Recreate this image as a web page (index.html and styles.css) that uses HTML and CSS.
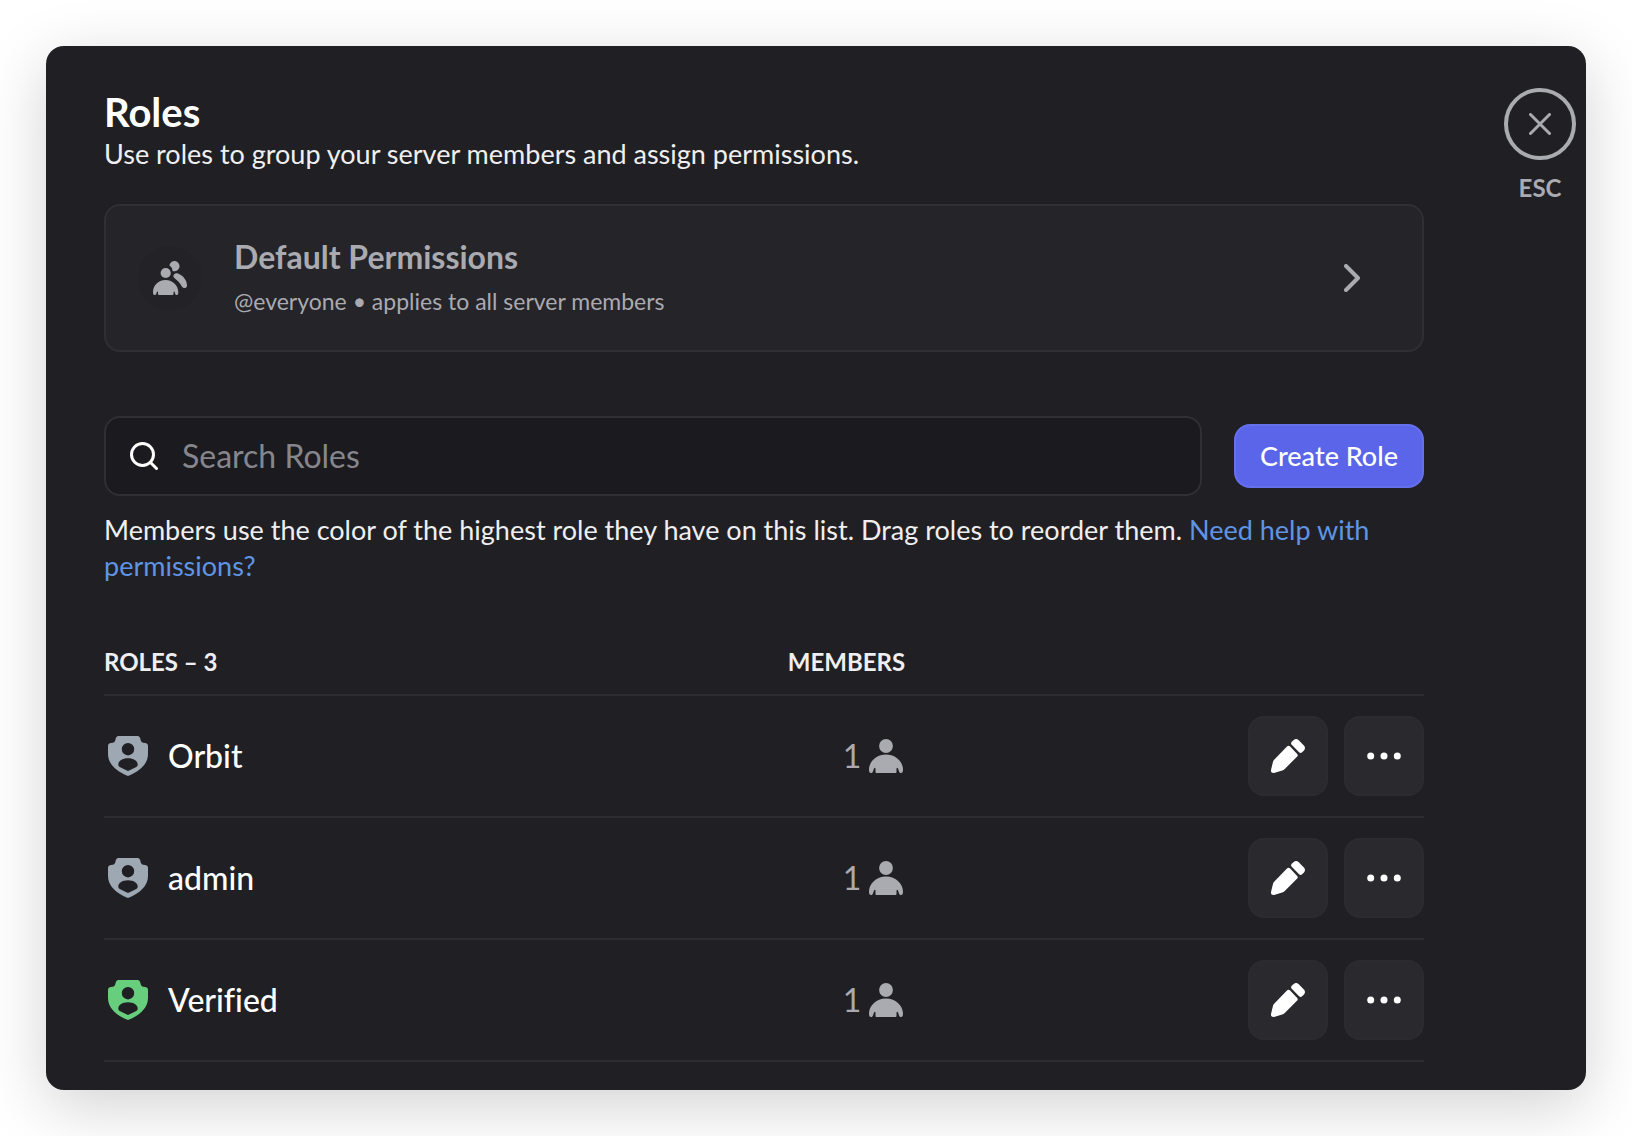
FILE: index.html
```
<!DOCTYPE html>
<html lang="en">
<head>
  <meta charset="UTF-8">
  <title>Roles</title>
  <meta name="viewport" content="width=device-width, initial-scale=1.0">
  <link rel="stylesheet" href="styles.css">
</head>
<body>

<!-- shared icons -->
<svg class="sprite" aria-hidden="true">
  <symbol id="i-shield" viewBox="0 0 40 40">
    <path fill-rule="evenodd" d="M10.500 0h19q2.500 0 3 3.500q.5 3.500 4.500 3.500q3 .3 3 3v8c0 10-8.500 17.500-20 22C8.500 35.500 0 28 0 18v-8q0-2.700 3-3q4 0 4.500-3.500Q8 0 10.500 0zM20 7a6.200 6.200 0 1 0 0 12.400A6.200 6.200 0 0 0 20 7zM20 22.300c-6 0-9.700 3-9.700 6.200 0 1.200.4 1.900 1.500 2.500 2.600 1.500 5.200 2.800 8.200 4 3-1.200 5.600-2.500 8.200-4 1.100-.6 1.500-1.300 1.500-2.500 0-3.200-3.700-6.200-9.700-6.200z"/>
  </symbol>
  <symbol id="i-user" viewBox="0 0 34 34">
    <circle cx="17" cy="7" r="6.900"/>
    <path d="M17 15.500C7 15.500 0 23 0 30.500c0 2.400.6 3.500 2 3.500 1.200 0 1.600-.6 2.100-2l.9-2.500c.4-1 1.500-.8 1.500.3V33q0 1 1 1h19q1 0 1-1v-3.200c0-1.100 1.100-1.300 1.500-.3l.9 2.500c.5 1.400.9 2 2.100 2 1.400 0 2-1.100 2-3.500C34 23 27 15.500 17 15.500z"/>
  </symbol>
  <symbol id="i-pencil" viewBox="0 0 34 34">
    <path d="M16.200 7.300q1.400-1.200 2.700 0l7.300 7.600q1.100 1.300 0 2.600L13.500 30.200q-1 1-2.300 1.400L3 33.900q-3.600.4-3-3l2-8.200q.4-1.300 1.400-2.300z"/>
    <path d="M22.500 1.200q2.600-2.300 5.200 0l5.200 5.300q2.200 2.500 0 5l-1.800 1.800q-1.500 1.200-3 0l-7.400-7.600q-1.200-1.500 0-2.900z"/>
  </symbol>
  <symbol id="i-dots" viewBox="0 0 34 34">
    <circle cx="3.700" cy="17" r="3.500"/><circle cx="17" cy="17" r="3.500"/><circle cx="30.300" cy="17" r="3.500"/>
  </symbol>
</svg>

<main class="window">
  <div class="content">

    <header>
      <h1 class="title">Roles</h1>
      <p class="text">Use roles to group your server members and assign permissions.</p>
    </header>

    <button class="default-card" type="button">
      <span class="default-icon">
        <svg width="34" height="34" viewBox="0 0 34 34" fill="currentColor">
          <path d="M16.400 4.300a5.100 5.100 0 1 1 4.300 5.900h-1a8 8 0 0 0-3.300-5.900z"/>
          <path d="M21 13.500c1-1.300 2.400-1.700 4-1.100 5.300 2 9 7 9 12.100 0 1.500-.8 2.500-2.200 2.500-1.500 0-2.400-.6-3.200-2-1.500-2.900-3.800-5.400-6.700-7.500-1.700-1.200-2-2.600-.9-4z"/>
          <circle cx="12.700" cy="12" r="5.100"/>
          <path d="M12.500 19C5 19 0 25 0 31c0 2.200.5 3 1.600 3 1 0 1.400-.5 1.800-1.600l.5-1.300c.3-.8 1.100-.6 1.100.2V33q0 1 1 1h13.500q1 0 1-1v-1.700c0-.8.8-1 1.100-.2l.5 1.300c.4 1.100.8 1.600 1.700 1.600 1 0 1.500-.8 1.500-3C25.300 25 20 19 12.500 19z"/>
        </svg>
      </span>
      <span class="default-text">
        <span class="default-name">Default Permissions</span>
        <span class="default-note">@everyone • applies to all server members</span>
      </span>
      <svg class="chevron" width="16" height="28" viewBox="0 0 16 28">
        <path d="M2 2l12 12L2 26"/>
      </svg>
    </button>

    <div class="toolbar">
      <label class="search">
        <svg class="search-icon" width="28" height="28" viewBox="0 0 28 28" role="img" aria-label="Search">
          <circle cx="12.500" cy="12.500" r="11"/><path d="M20.300 20.300l6.200 6.200"/>
        </svg>
        <input class="search-input" type="text" placeholder="Search Roles">
      </label>
      <button class="create-btn" type="button">Create Role</button>
    </div>

    <p class="text">
      Members use the color of the highest role they have on this list. Drag roles to reorder them.
      <a class="link" href="#">Need help with permissions?</a>
    </p>

    <table class="roles">
      <colgroup>
        <col class="col-role">
        <col class="col-members">
        <col>
      </colgroup>
      <thead>
        <tr>
          <th>ROLES – 3</th>
          <th class="members">MEMBERS</th>
          <td></td>
        </tr>
      </thead>
      <tbody>
        <tr>
          <td>
            <div class="role">
              <svg class="shield" width="40" height="40"><use href="#i-shield"/></svg>
              Orbit
            </div>
          </td>
          <td class="members">
            <div class="count">1 <svg width="34" height="34"><use href="#i-user"/></svg></div>
          </td>
          <td>
            <div class="actions">
              <button class="icon-btn" type="button" aria-label="Edit"><svg width="34" height="34"><use href="#i-pencil"/></svg></button>
              <button class="icon-btn" type="button" aria-label="More"><svg width="34" height="34"><use href="#i-dots"/></svg></button>
            </div>
          </td>
        </tr>
        <tr>
          <td>
            <div class="role">
              <svg class="shield" width="40" height="40"><use href="#i-shield"/></svg>
              admin
            </div>
          </td>
          <td class="members">
            <div class="count">1 <svg width="34" height="34"><use href="#i-user"/></svg></div>
          </td>
          <td>
            <div class="actions">
              <button class="icon-btn" type="button" aria-label="Edit"><svg width="34" height="34"><use href="#i-pencil"/></svg></button>
              <button class="icon-btn" type="button" aria-label="More"><svg width="34" height="34"><use href="#i-dots"/></svg></button>
            </div>
          </td>
        </tr>
        <tr>
          <td>
            <div class="role">
              <svg class="shield green" width="40" height="40"><use href="#i-shield"/></svg>
              Verified
            </div>
          </td>
          <td class="members">
            <div class="count">1 <svg width="34" height="34"><use href="#i-user"/></svg></div>
          </td>
          <td>
            <div class="actions">
              <button class="icon-btn" type="button" aria-label="Edit"><svg width="34" height="34"><use href="#i-pencil"/></svg></button>
              <button class="icon-btn" type="button" aria-label="More"><svg width="34" height="34"><use href="#i-dots"/></svg></button>
            </div>
          </td>
        </tr>
      </tbody>
    </table>
  </div>

  <!-- close -->
  <aside class="close">
    <button class="close-btn" type="button" aria-label="Close">
      <svg width="22" height="22" viewBox="0 0 22 22"><path d="M1.500 1.500l19 19M20.500 1.500l-19 19"/></svg>
    </button>
    <span>ESC</span>
  </aside>
</main>

</body>
</html>
```
FILE: styles.css
```
:root {
  --bg: #202024;
  --card: #242429;
  --field: #1b1b1f;
  --line: #2f2f34;
  --text: #efeff1;
  --muted: #aaaab1;
  --link: #5f94e3;
  --accent: #5a65ea;
  --radius: 16px;
}

* { box-sizing: border-box; }

body {
  margin: 0;
  padding: 46px;
  background: #fff;
  color: var(--text);
  font-family: Lato, sans-serif;
  font-size: 27px;
  font-variant-ligatures: none;
  line-height: 36px;
}

button, input {
  font: inherit;
  color: inherit;
}

button { cursor: pointer; }

svg {
  display: block;
  flex: none;
}

.sprite {
  position: absolute;
  width: 0;
  height: 0;
}

.window {
  display: flex;
  align-items: flex-start;
  padding: 42px 10px 28px 58px;
  background: var(--bg);
  border-radius: 18px;
  box-shadow: 0 16px 64px rgba(0,0,0,0.18);
}

.content {
  flex: 1;
  min-width: 0;
}

.title {
  margin: 0;
  color: #fff;
  font-size: 40px;
  font-weight: 700;
  line-height: 48px;
}

.text { margin: 0; }

.link {
  color: var(--link);
  text-decoration: none;
}

/* Default permissions */

.default-card {
  display: flex;
  align-items: center;
  width: 100%;
  height: 148px;
  margin: 32px 0 64px;
  padding: 0 62px 0 32px;
  background: var(--card);
  border: 2px solid var(--line);
  border-radius: var(--radius);
  color: var(--muted);
  text-align: left;
}

.default-icon {
  display: flex;
  align-items: center;
  justify-content: center;
  width: 64px;
  height: 64px;
  margin-right: 32px;
  background: #232327;
  border-radius: 50%;
}

.default-text {
  display: flex;
  flex: 1;
  flex-direction: column;
  gap: 8px;
  padding-top: 2px;
}

.default-name {
  font-size: 32px;
  font-weight: 700;
}

.default-note {
  font-size: 23px;
}

.chevron {
  fill: none;
  stroke: currentColor;
  stroke-width: 4;
  stroke-linecap: round;
  stroke-linejoin: round;
}

/* Search */

.toolbar {
  display: flex;
  align-items: center;
  gap: 32px;
  margin-bottom: 16px;
}

.search {
  display: flex;
  flex: 1;
  align-items: center;
  gap: 24px;
  height: 80px;
  padding: 0 24px;
  background: var(--field);
  border: 2px solid var(--line);
  border-radius: var(--radius);
}

.search-icon {
  fill: none;
  stroke: #fff;
  stroke-width: 3;
  stroke-linecap: round;
}

.search-input {
  flex: 1;
  min-width: 0;
  padding: 0;
  background: none;
  border: none;
  outline: none;
  font-size: 32px;
}

.search-input::placeholder { color: #86868c; }

.create-btn {
  height: 64px;
  padding: 0 24px;
  background: var(--accent);
  border: 2px solid #6570ec;
  border-radius: var(--radius);
  color: #fff;
  font-weight: 500;
}

/* Roles table */

.roles {
  width: 100%;
  margin-top: 46px;
  border-collapse: separate;
  border-spacing: 0;
  table-layout: fixed;
}

.col-role { width: 50%; }
.col-members { width: 11%; }

.roles th, .roles td {
  padding: 0;
  border-bottom: 2px solid #2c2c31;
}

.roles th {
  padding: 14px 0;
  font-size: 24px;
  font-weight: 700;
  text-align: left;
}

.roles .members {
  padding-right: 4px;
  text-align: right;
}

.role {
  display: flex;
  align-items: center;
  gap: 20px;
  padding-left: 4px;
  color: #fff;
  font-size: 32px;
  font-weight: 500;
}

.shield { fill: #9da8b3; }
.shield.green { fill: #66ce7c; }

.count {
  display: flex;
  align-items: center;
  justify-content: flex-end;
  gap: 8px;
  padding-right: 2px;
  color: var(--muted);
  fill: var(--muted);
  font-size: 32px;
}

.actions {
  display: flex;
  justify-content: flex-end;
  gap: 16px;
  padding: 20px 0;
}

.icon-btn {
  display: flex;
  align-items: center;
  justify-content: center;
  width: 80px;
  height: 80px;
  padding: 0;
  background: #2a2a2e;
  border: 2px solid #2c2c30;
  border-radius: var(--radius);
  fill: #fff;
}

/* Close */

.close {
  display: flex;
  flex-direction: column;
  align-items: center;
  gap: 10px;
  width: 72px;
  margin-left: 80px;
  color: var(--muted);
  font-size: 24px;
  font-weight: 700;
}

.close-btn {
  display: flex;
  align-items: center;
  justify-content: center;
  width: 72px;
  height: 72px;
  padding: 0;
  background: none;
  border: 4px solid var(--muted);
  border-radius: 50%;
}

.close-btn svg {
  stroke: currentColor;
  stroke-width: 3;
  stroke-linecap: round;
}
```
